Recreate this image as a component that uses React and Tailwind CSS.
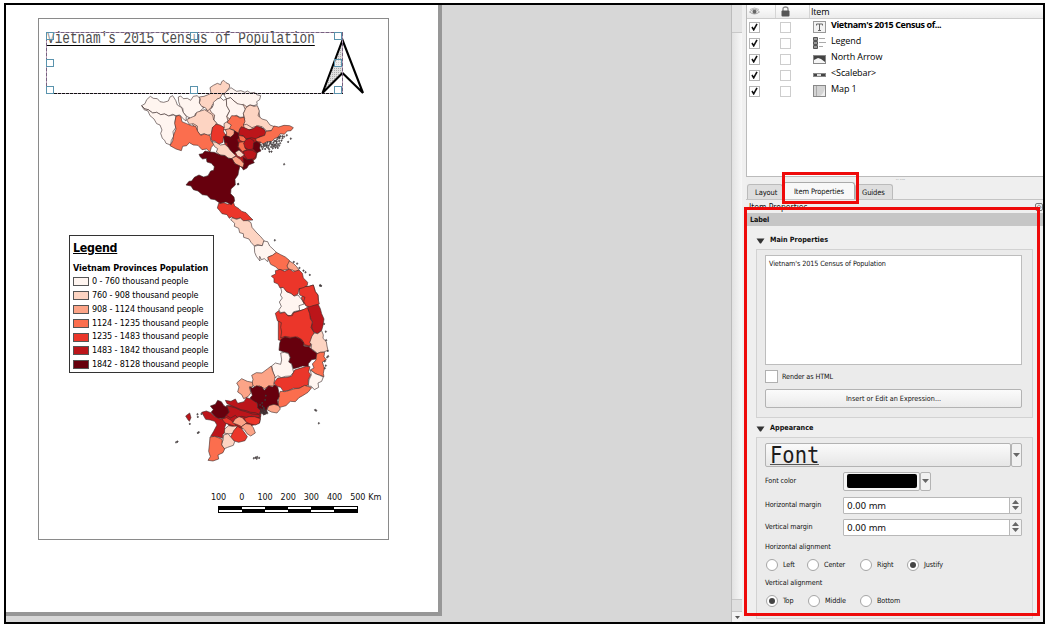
import React from "react";

const P0 = "#fff5f0", P1 = "#fdd4c2", P2 = "#fca487", P3 = "#fb6e4e", P4 = "#eb362a", P5 = "#bc151a", P6 = "#67000d";

const NORTH = [
  [P5, "284,180 330,160 400,160 404,184 386,212 378,250 340,282 300,245 284,205"],
  [P1, "175,130 300,70 385,100 395,158 320,170 250,158 200,165"],
  [P1, "240,38 250,31 262,25 272,29 275,20 281,16 288,23 298,28 299,36 292,46 286,57 276,58 270,70 262,72 257,83 248,88 243,98 233,108 226,98 212,94 208,84 211,74 208,66 222,64 232,60 243,55"],
  [P0, "286,52 296,44 303,38 312,44 320,49 333,47 345,52 352,48 362,54 374,52 380,59 392,62 389,74 380,80 382,88 372,92 360,90 350,95 340,88 331,92 322,86 312,78 302,68 290,72 283,62"],
  [P0, "35,92 45,86 50,74 61,64 70,70 82,71 90,80 101,82 115,78 120,66 128,62 137,76 142,90 155,98 160,112 169,124 168,138 158,130 150,120 138,122 128,118 116,123 104,117 92,119 80,112 68,114 55,104 45,102"],
  [P0, "35,92 45,102 55,104 68,114 80,112 92,119 104,117 116,123 130,120 138,124 135,140 137,158 129,170 131,184 124,196 122,210 108,205 104,196 97,190 92,175 96,165 90,150 80,146 72,132 60,122 54,108 42,104"],
  [P0, "145,66 152,63 160,71 172,70 182,76 190,64 202,62 209,70 208,84 216,95 222,98 212,106 208,112 196,116 194,126 182,130 170,124 160,112 158,100 150,92 146,80"],
  [P1, "170,134 182,128 196,122 200,112 212,108 224,104 236,112 248,120 251,135 260,143 256,152 247,158 245,176 232,182 222,176 210,180 202,168 202,153 190,146 178,148"],
  [P0, "250,82 262,72 272,68 280,76 289,72 290,92 299,108 290,124 294,138 282,146 283,158 270,155 260,144 252,135 254,120 244,112 240,104 246,98 250,90"],
  [P0, "289,72 302,68 312,78 322,86 340,90 346,104 340,116 342,126 330,127 320,121 308,126 298,132 291,124 299,108 290,92"],
  [P1, "348,98 360,90 372,94 382,92 388,108 384,122 396,132 410,136 420,150 436,156 426,166 410,168 398,156 384,152 366,158 350,148 340,150 344,130 340,116"],
  [P3, "299,132 305,122 320,123 330,129 342,127 345,139 340,150 343,158 330,160 325,178 313,166 298,161 304,150 291,142"],
  [P3, "138,124 147,121 153,126 156,140 170,146 184,152 197,154 203,169 212,181 224,177 240,182 243,198 252,208 244,217 240,231 230,222 216,224 204,211 190,210 178,203 170,212 158,214 154,227 138,222 120,212 128,198 131,180 138,162 134,145"],
  [P4, "248,157 258,148 270,150 282,157 281,170 287,180 280,190 279,202 265,208 256,199 244,196 243,180"],
  [P2, "286,164 298,161 313,167 315,180 303,187 288,184 290,174"],
  [P6, "280,185 288,182 302,187 312,177 313,168 325,174 329,187 321,194 326,204 323,215 331,226 318,232 311,240 304,228 294,220 292,204 284,202"],
  [P5, "328,166 334,155 348,160 358,165 371,160 380,153 391,157 405,165 408,175 400,184 389,184 380,192 364,188 348,192 340,182 326,180"],
  [P3, "408,169 424,167 432,153 446,156 462,151 479,152 490,158 483,167 472,168 463,178 451,176 444,187 433,191 426,199 411,200 399,207 391,201 379,200 377,191 392,185 404,181"],
  [P3, "326,181 340,184 348,192 352,197 341,201 329,196"],
  [P3, "327,202 342,200 347,206 345,219 350,225 337,230 325,215"],
  [P5, "347,194 360,190 371,197 376,213 370,222 356,224 345,218 341,205"],
  [P6, "371,204 380,199 391,207 389,220 393,228 381,233 369,221"],
  [P5, "340,229 354,225 367,226 380,234 376,247 363,255 352,253 344,243"],
  [P1, "316,232 327,225 335,232 343,240 332,247 322,243"],
  [P6, "339,247 352,254 366,252 373,263 356,270 351,279 340,285 335,273 342,265"],
  [P2, "305,250 318,244 331,253 342,266 339,277 324,272 313,264"],
  [P1, "246,199 260,203 271,210 285,208 295,217 301,226 310,235 318,242 304,251 293,249 283,241 270,240 259,231 263,221 254,215"],
  [P6, "207,238 217,236 225,228 240,231 253,232 262,236 273,241 285,242 295,250 306,251 315,266 330,273 326,288 324,300 315,313 316,330 303,342 302,356 312,366 314,378 304,389 288,381 270,385 255,374 242,372 231,361 217,359 204,348 190,344 183,333 168,330 177,319 185,318 193,307 207,300 221,306 234,302 242,288 251,286 253,275 244,265 231,261 229,250 218,252 211,246"],
];

const CENTER = [
  [P4, "116,70 130,68 144,73 160,66 164,78 177,86 185,94 198,98 207,108 219,120 202,121 190,124 181,114 168,117 154,111 148,115 141,104 126,101 119,92 112,84"],
  [P1, "152,119 158,114 170,118 181,114 190,122 204,122 213,128 216,142 228,156 242,170 253,183 247,197 232,194 223,198 213,187 207,177 191,172 190,161 179,158 176,145 163,139 164,130"],
  [P0, "223,199 234,196 247,197 251,183 263,185 269,198 279,207 289,217 280,226 266,230 263,245 253,236 244,239 239,229 240,243 229,229 224,217"],
  [P3, "263,232 277,226 289,217 302,224 316,231 328,241 331,251 322,256 327,267 309,271 295,268 286,260 272,253 268,244"],
  [P2, "328,243 340,250 349,259 357,269 348,276 338,270 327,269 321,258"],
  [P4, "274,288 287,282 286,272 300,268 314,274 328,267 340,275 357,270 367,280 370,294 383,307 382,316 370,323 357,326 354,342 342,348 333,340 320,335 309,322 300,324 294,312 282,307 282,296"],
];

const SOUTH = [
  [P5, "185,377 260,370 290,390 284,428 240,445 200,445 176,420"],
  [P4, "340,110 430,85 445,160 436,200 340,180"],
  [P0, "347,21 357,22 365,35 378,40 389,48 399,45 411,60 418,72 402,77 404,91 386,95 378,107 368,106 359,96 346,98 342,89 349,79 343,66 352,54 346,45 350,36"],
  [P4, "403,26 418,20 432,19 445,15 451,35 459,45 460,60 456,72 441,78 426,79 417,70 409,54 413,47"],
  [P5, "427,84 436,75 447,74 458,70 466,86 470,101 477,117 474,137 470,151 458,161 446,156 440,141 442,126 436,113 431,101"],
  [P4, "331,100 341,92 345,100 359,97 369,108 382,107 386,98 403,93 417,88 427,82 434,101 436,116 442,126 438,143 448,159 442,170 439,186 434,198 419,194 411,179 397,171 376,172 360,169 347,174 350,156 347,142 349,128 337,122"],
  [P1, "441,168 448,159 458,161 470,152 475,165 474,175 484,185 486,198 489,211 476,216 466,217 456,221 448,212 438,207 440,193 434,188"],
  [P6, "344,190 348,178 360,171 375,175 391,171 406,177 416,188 415,198 432,200 443,211 457,221 453,237 440,239 430,251 430,260 413,258 398,263 385,266 380,252 371,247 376,232 370,219 357,216 342,211"],
  [P3, "455,222 466,217 479,217 477,230 484,240 472,246 478,264 475,280 477,290 464,286 450,281 437,269 447,264 442,252 453,240"],
  [P0, "347,219 358,217 371,221 375,233 371,246 380,252 383,266 386,277 376,288 361,289 349,293 338,287 331,294 324,277 320,258 331,249 347,253 350,240"],
  [P4, "327,308 338,294 350,293 366,292 379,289 389,270 405,265 425,259 435,260 431,276 437,284 430,299 430,315 413,320 402,325 385,325 372,331 355,334 347,322 333,318"],
  [P0, "436,270 451,281 464,286 475,291 470,304 459,309 461,322 448,329 439,319 430,318 432,300 439,285"],
  [P3, "341,346 346,334 360,335 377,330 390,326 403,325 419,316 440,323 429,337 413,347 402,353 391,365 376,364 363,377 345,382 339,376 341,361"],
  [P2, "260,286 274,278 291,279 307,267 319,258 322,271 330,290 329,300 326,312 329,318 312,318 299,326 284,318 271,322 260,313 264,298"],
  [P2, "215,309 230,296 247,304 262,307 264,319 253,323 258,338 249,350 236,356 230,344 218,336 222,321"],
  [P6, "254,320 263,324 275,317 291,321 298,331 311,317 322,321 329,315 338,321 341,334 343,349 337,361 340,377 321,375 308,381 303,397 291,395 278,383 276,369 262,363 255,354 262,346 258,334"],
  [P2, "306,389 312,377 327,373 341,377 346,387 336,399 319,396"],
  [P5, "181,361 198,364 211,357 218,370 237,365 244,353 258,357 277,370 278,384 287,391 283,403 271,398 257,397 244,392 228,389 214,383 200,377 186,371"],
  [P6, "136,378 151,373 158,361 169,365 177,377 188,383 192,400 184,405 177,414 158,416 149,409 138,397 145,389"],
  [P5, "110,397 124,393 137,398 150,410 165,417 177,413 188,420 184,430 179,442 182,455 173,464 173,475 157,470 137,469 146,454 156,435 149,424 136,420 122,418"],
  [P5, "185,377 198,380 212,384 226,391 242,395 262,402 283,404 286,411 273,414 259,409 244,412 230,409 218,413 211,406 197,414 184,406 193,396"],
  [P4, "171,417 185,413 197,420 209,431 214,440 201,436 190,432 180,429"],
  [P2, "210,417 222,410 232,413 240,422 249,426 239,433 230,440 218,434 203,429"],
  [P4, "237,415 252,410 269,410 286,416 283,430 271,435 257,432 244,427"],
  [P1, "179,447 191,437 203,439 217,438 212,449 204,460 188,462 178,459"],
  [P2, "228,441 242,431 256,433 265,443 271,459 257,468 246,461 239,450"],
  [P4, "207,451 218,439 230,446 240,460 247,470 240,482 221,487 208,483 196,472"],
  [P1, "176,465 189,461 198,472 209,485 205,496 188,502 176,507 169,493 174,481"],
  [P3, "135,471 149,469 165,475 172,479 170,495 179,507 174,518 159,525 161,537 144,543 129,541 136,530 131,514 133,495"],
  [P5, "62,408 74,399 78,413 73,424 68,418"],
  ["#4a2a30", "286,384 292,388 297,382 302,390 308,397 300,404 293,402 287,396"],
];

const CENTER_EAST = [
  [P4, "358,326 373,320 387,319 400,315 406,335 414,345 415,360 418,372 402,376 389,380 378,378 371,364 375,352 359,345"],
];

const ISLES_N = "392,210 399,216 402,208 405,222 412,203 416,212 420,201 423,216 430,203 428,220 434,209 437,198 441,214 444,188 447,198 450,205 451,184 457,190 462,185 470,181 474,201 482,191 410,216 397,222 417,223 443,219 439,205 408,211 425,209 433,198 448,190 454,197 418,230 424,230 462,268 324,328 432,214 436,218 414,219 404,213 400,210 407,206 411,211 419,207 428,209 440,200 444,208 448,186 429,214 422,204 394,215 437,211 441,193 457,184 447,212".split(" ");
const ISLES_C = "174,12 284,181 358,264 370,272 376,277 389,285 420,316 423,318 351,251 341,246".split(" ");
const ISLES_S = "465,17 477,132 482,155 483,181 488,213 489,229 486,232 479,244 482,257 479,265 453,392 450,390 461,430 101,457 98,459 37,485 33,487 109,402 97,403 98,411 74,432 266,535 271,533 276,531 282,534 275,536 287,399 291,397 296,403 300,399 306,400 299,394 285,375 291,369 300,360 302,347 292,379 296,384".split(" ");

function Region({ x, y, shapes, isles = [] }) {
  return (
    <g transform={`translate(${x} ${y}) scale(0.33333)`}>
      {shapes.map(([fill, points], i) => (
        <polygon key={i} points={points} fill={fill} stroke="#3b2a2a" strokeWidth="1.8" strokeLinejoin="round" />
      ))}
      {isles.map((p, i) => {
        const [cx, cy] = p.split(",").map(Number);
        return <path key={i} d={`M${cx - 2} ${cy - 1}l3 -2l2 3l-3 3z`} fill="#55494b" stroke="#2e2a2c" strokeWidth="1.2" />;
      })}
    </g>
  );
}

function VietnamMap() {
  return (
    <svg className="absolute left-0 top-0" width="438" height="612" viewBox="0 0 438 612">
      <Region x={165} y={280} shapes={SOUTH} isles={ISLES_S} />
      <Region x={180} y={180} shapes={CENTER_EAST} />
      <Region x={180} y={180} shapes={CENTER} isles={ISLES_C} />
      <Region x={130} y={75} shapes={NORTH} isles={ISLES_N} />
    </svg>
  );
}

function Selection() {
  const handles = [[46, 32.5], [190.5, 32.5], [334.5, 32.5], [46, 59.5], [334.5, 59.5], [46, 86], [190.5, 86], [334.5, 86]];
  return (
    <svg className="absolute left-0 top-0" width="438" height="110" viewBox="0 0 438 110">
      <defs>
        <pattern id="dots" width="2" height="2" patternUnits="userSpaceOnUse">
          <rect width="2" height="2" fill="#e0e0e0" />
          <rect width="1" height="1" fill="#aaa" />
        </pattern>
      </defs>
      <path d="M342.5 40L322.5 93L342.5 73Z" fill="url(#dots)" />
      <path d="M342.5 40L322.5 93L342.5 73L363 93Z" fill="none" stroke="#000" strokeWidth="2.1" />
      <rect x="46.5" y="32.5" width="296" height="61" fill="none" stroke="#b59ab5" />
      <path d="M46 93.5H343" stroke="#111" strokeDasharray="3 1" />
      <path d="M46 32.5H343M46.5 33V93M342.5 33V93" stroke="#75627f" strokeDasharray="3 2" />
      {handles.map(([x, y], i) => (
        <rect key={i} x={Math.floor(x) + 0.5} y={Math.floor(y) + 0.5} width="7" height="7" fill="#fff" fillOpacity="0.45" stroke="#5a93ad" />
      ))}
    </svg>
  );
}

const LEGEND = [
  ["bg-[#fff5f0]", "0 - 760 thousand people"],
  ["bg-[#fdd4c2]", "760 - 908 thousand people"],
  ["bg-[#fca487]", "908 - 1124 thousand people"],
  ["bg-[#fb6e4e]", "1124 - 1235 thousand people"],
  ["bg-[#eb362a]", "1235 - 1483 thousand people"],
  ["bg-[#bc151a]", "1483 - 1842 thousand people"],
  ["bg-[#67000d]", "1842 - 8128 thousand people"],
];

function Legend() {
  return (
    <div className="absolute left-[69px] top-[235px] w-[145px] h-[138px] bg-white border border-[#333] pl-[3px] pt-[4px] font-['DejaVu_Sans_Condensed','DejaVu_Sans',sans-serif] text-black whitespace-nowrap">
      <div className="text-[12.3px] leading-[16px] font-bold underline tracking-[-0.25px]">Legend</div>
      <div className="mt-[5px] text-[9px] leading-[14px] font-bold tracking-[-0.07px]">Vietnam Provinces Population</div>
      {LEGEND.map(([color, label]) => (
        <div key={label} className="flex h-[13.8px] items-center gap-[3px] text-[9px] tracking-[-0.12px]">
          <span className={`h-[9px] w-[16px] border border-[#555] ${color}`} />
          <span>{label}</span>
        </div>
      ))}
    </div>
  );
}

function ScaleBar() {
  return (
    <div className="absolute left-[207px] top-[491px] font-['DejaVu_Sans_Condensed','DejaVu_Sans',sans-serif] text-[9px] leading-[12px] text-[#111]">
      <div className="flex tracking-[-0.1px]">
        {["100", "0", "100", "200", "300", "400", "500"].map((n, i) => (
          <span key={i} className="w-[23.2px] text-center">{n}</span>
        ))}
        <span className="-ml-[1px]">Km</span>
      </div>
      <div className="ml-[11px] mt-[3px] flex h-[7px] w-[140px] border border-black">
        {[0, 1, 2, 3, 4, 5].map((i) => (
          <div key={i} className={`flex flex-1 ${i % 2 ? "flex-col-reverse" : "flex-col"}`}>
            <span className="h-[3px] bg-black" />
            <span className="h-[2px] bg-white" />
          </div>
        ))}
      </div>
    </div>
  );
}

function Canvas() {
  return (
    <div className="relative h-full w-[725px] overflow-hidden bg-[#d7d7d7]">
      <div className="h-[611px] w-[436px] border-b-4 border-r-4 border-[#979797] bg-white" />
      <div className="absolute -left-[6px] -top-[5px] h-[612px] w-[438px]">
        <div className="absolute left-[38px] top-[18px] h-[522px] w-[351px] border border-[#8a8a8a]" />
        <VietnamMap />
        <div className="absolute left-[47px] top-[31px] h-[15px] origin-left scale-x-[0.797] whitespace-nowrap border-b border-black font-['Liberation_Mono',monospace] text-[16px] leading-[17px] text-[#4c4c4c]">
          Vietnam's 2015 Census of Population
        </div>
        <Selection />
        <Legend />
        <ScaleBar />
      </div>
    </div>
  );
}

function ItemIcon({ kind }) {
  return (
    <svg width="13" height="12" viewBox="0 0 13 12" className="shrink-0">
      {kind === "label" && (
        <g>
          <rect x="0.5" y="0.5" width="12" height="11" fill="#f3f3f3" stroke="#999" />
          <path d="M3.5 4.5V3H9.5V4.5M6.5 3V9.5M5 9.5H8" stroke="#666" fill="none" />
        </g>
      )}
      {kind === "legend" && (
        <g>
          <path d="M0.5 0.5h4v3h-4zM0.5 4.5h4v3h-4zM0.5 8.5h4v3h-4z" fill="#999" stroke="#555" />
          <path d="M6 1.5H12M6 5.5H13M6 9.5H10" stroke="#aaa" />
        </g>
      )}
      {kind === "picture" && (
        <g>
          <rect x="0.5" y="2.5" width="12" height="8" fill="#f5f5f5" stroke="#888" />
          <path d="M1 3H12V9L8 6L5 5L1 7Z" fill="#444" />
        </g>
      )}
      {kind === "scale" && (
        <g>
          <rect x="0.5" y="4.5" width="12" height="3" fill="#ddd" stroke="#888" />
          <path d="M1 5h3v2H1zM8 5h4v2H8z" fill="#444" />
        </g>
      )}
      {kind === "map" && (
        <g>
          <rect x="0.5" y="0.5" width="12" height="11" fill="#d4d4d4" stroke="#888" />
          <path d="M3.5 1V11" stroke="#aaa" />
          <path d="M7 11Q11 8 12 3V11Z" fill="#eee" />
        </g>
      )}
    </svg>
  );
}

const ITEMS = [
  ["label", "Vietnam's 2015 Census of..."],
  ["legend", "Legend"],
  ["picture", "North Arrow"],
  ["scale", "<Scalebar>"],
  ["map", "Map 1"],
];

function ItemTree() {
  return (
    <div className="h-[172px] border-b border-l border-[#bbb] bg-white font-['Open_Sans',sans-serif] text-[9px] text-black">
      <div className="flex h-[14px] items-center border-b border-[#ccc] bg-gradient-to-b from-white to-[#ececec]">
        <div className="w-[28px] pl-[2px]">
          <svg width="11" height="9" viewBox="0 0 11 9">
            <path d="M0.5 5Q5.5 -0.5 10.5 5Q5.5 9 0.5 5Z" fill="#e8e8e8" stroke="#aaa" />
            <circle cx="5.5" cy="4.7" r="2" fill="#666" />
            <path d="M1 2.5Q5.5 -0.5 10 2.5" fill="none" stroke="#aaa" strokeWidth="0.8" />
          </svg>
        </div>
        <div className="flex h-full w-[34px] items-center border-l border-[#d5d5d5] pl-[5px]">
          <svg width="9" height="11" viewBox="0 0 9 11">
            <path d="M2 5V3Q2 1 4.5 1T7 3V5" fill="none" stroke="#888" strokeWidth="1.3" />
            <rect x="0.5" y="4.5" width="8" height="6" rx="1" fill="#555" />
          </svg>
        </div>
        <div className="border-l border-[#d5d5d5] pl-[1px] leading-[13px] tracking-[-0.2px]">Item</div>
      </div>
      {ITEMS.map(([kind, label], i) => (
        <div key={kind} className="flex h-[16px] items-center">
          <span className="ml-[2px] flex h-[11px] w-[11px] items-center justify-center border border-[#b5b5b5] bg-white">
            <svg width="7" height="8" viewBox="0 0 7 8"><path d="M1 4L2.7 6.8L6 0.8" fill="none" stroke="#111" strokeWidth="1.6" /></svg>
          </span>
          <span className="ml-[20px] h-[11px] w-[11px] border border-[#cdcdcd] bg-white" />
          <span className="ml-[22px] flex"><ItemIcon kind={kind} /></span>
          <span className={`ml-[5px] -mt-[5px] whitespace-nowrap leading-[12px] ${i === 0 ? "font-bold tracking-[-0.4px]" : "tracking-[-0.1px]"}`}>{label}</span>
        </div>
      ))}
    </div>
  );
}

function Section({ title }) {
  return (
    <div className="flex items-center gap-[5px] pl-[10px] font-bold tracking-[0px]">
      <svg width="9" height="6" viewBox="0 0 9 6" className="mt-[3px]"><path d="M0.5 0.5H8.5L5 5.5H4Z" fill="#333" /></svg>
      {title}
    </div>
  );
}

function Arrow({ up }) {
  return (
    <svg width="7" height="4" viewBox="0 0 7 4"><path d={up ? "M0 4H7L3.5 0Z" : "M0 0H7L3.5 4Z"} fill="#666" /></svg>
  );
}

function Spin({ label, className }) {
  return (
    <div className={`flex h-[18px] items-center ${className}`}>
      <span className="w-[78px]">{label}</span>
      <div className="flex h-[17px] w-[179px] rounded-[1px] border border-[#b8b8b8] bg-white">
        <span className="flex-1 pl-[3px] font-['DejaVu_Sans',sans-serif] text-[9px] leading-[16px] tracking-[-0.25px]">0.00 mm</span>
        <span className="flex w-[12px] flex-col items-center justify-center gap-[2px] border-l border-[#b8b8b8] bg-[#f3f3f3]"><Arrow up /><Arrow /></span>
      </div>
    </div>
  );
}

function Radio({ label, on, className = "" }) {
  return (
    <span className={`flex items-center gap-[5px] ${className}`}>
      <span className="flex h-[12px] w-[12px] shrink-0 items-center justify-center rounded-full border border-[#a5a5a5] bg-white">
        {on && <span className="h-[6px] w-[6px] rounded-full bg-[#444]" />}
      </span>
      {label}
    </span>
  );
}

function Properties() {
  return (
    <div className="h-[409px] font-['DejaVu_Sans_Condensed','DejaVu_Sans',sans-serif] text-[7.2px] leading-[10px] tracking-[-0.1px] text-[#111]">
      <div className="flex h-[13px] items-center bg-[#c6c6c6] pl-[4px] font-bold">Label</div>
      <div className="flex h-[23px] items-center pt-[4px]"><Section title="Main Properties" /></div>
      <div className="ml-[10px] h-[169px] w-[277px] border border-[#d2d2d2] bg-[#ebebeb] pl-[8px] pt-[5px]">
        <div className="h-[110px] w-[257px] border border-[#bdbdbd] bg-white pl-[3px] pt-[3px]">Vietnam's 2015 Census of Population</div>
        <div className="mt-[5px] flex h-[13px] items-center gap-[4px]">
          <span className="h-[13px] w-[13px] border border-[#b0b0b0] bg-white" />Render as HTML
        </div>
        <div className="mt-[6px] flex h-[19px] w-[257px] items-center justify-center rounded-[2px] border border-[#b3b3b3] bg-gradient-to-b from-[#fbfbfb] to-[#ebebeb] tracking-[0px]">Insert or Edit an Expression...</div>
      </div>
      <div className="flex h-[19px] items-center"><Section title="Appearance" /></div>
      <div className="ml-[10px] h-[182px] w-[277px] border border-[#d2d2d2] bg-[#ebebeb] pl-[8px] pt-[5px]">
        <div className="flex h-[24px] w-[257px]">
          <div className="flex-1 overflow-hidden rounded-[2px] border border-[#b3b3b3] bg-gradient-to-b from-[#fbfbfb] to-[#e6e6e6] pl-[4px]">
            <span className="inline-block h-[21px] origin-left scale-x-[0.89] border-b border-[#555] font-['DejaVu_Sans_Mono',monospace] text-[23px] leading-[22px] tracking-normal text-[#1c1c1c]">Font</span>
          </div>
          <div className="flex w-[11px] items-center justify-center rounded-[2px] border border-[#b3b3b3] bg-[#f1f1f1]"><Arrow /></div>
        </div>
        <div className="mt-[4px] flex h-[20px] items-center">
          <span className="w-[78px]">Font color</span>
          <div className="flex h-[19px] w-[77px] items-center justify-center rounded-[2px] border border-[#b3b3b3] bg-[#f6f6f6]"><span className="h-[14px] w-[70px] rounded-[2px] bg-black" /></div>
          <div className="flex h-[19px] w-[11px] items-center justify-center rounded-[2px] border border-[#b3b3b3] bg-[#f1f1f1]"><Arrow /></div>
        </div>
        <Spin label="Horizontal margin" className="mt-[5px]" />
        <Spin label="Vertical margin" className="mt-[4px]" />
        <div className="mt-[6px]">Horizontal alignment</div>
        <div className="mt-[7px] flex h-[12px] items-center pl-px">
          <Radio label="Left" className="w-[41px]" />
          <Radio label="Center" className="w-[53px]" />
          <Radio label="Right" className="w-[47px]" />
          <Radio label="Justify" on />
        </div>
        <div className="mt-[7px]">Vertical alignment</div>
        <div className="mt-[7px] flex h-[12px] items-center pl-px">
          <Radio label="Top" on className="w-[42px]" />
          <Radio label="Middle" className="w-[52px]" />
          <Radio label="Bottom" />
        </div>
      </div>
    </div>
  );
}

function SidePanel() {
  return (
    <div className="flex w-[297px] flex-col bg-[#efefef]">
      <ItemTree />
      <div className="flex h-[6px] justify-center pl-[12px] text-[5px] leading-[2px] text-[#999]">.. ....</div>
      <div className="flex h-[16px] items-end pl-px font-['DejaVu_Sans_Condensed','DejaVu_Sans',sans-serif] text-[7.5px] tracking-[-0.1px] text-[#111]">
        <div className="flex h-[15px] w-[36px] items-center rounded-t-[3px] border border-b-0 border-[#bbb] bg-[#dedede] pl-[7px] pt-px">Layout</div>
        <div className="flex h-[17px] w-[72px] items-center justify-center rounded-t-[3px] border border-b-0 border-[#aaa] bg-[#f8f8f8] pt-px">Item Properties</div>
        <div className="flex h-[15px] w-[38px] items-center rounded-t-[3px] border border-b-0 border-[#bbb] bg-[#dedede] pl-[6px] pt-px">Guides</div>
      </div>
      <div className="flex h-[14px] items-center justify-between border-t border-[#c4c4c4] pl-[3px] font-['DejaVu_Sans_Condensed','DejaVu_Sans',sans-serif] text-[8.5px] leading-[12px] text-[#111]">
        Item Properties
        <span className="flex h-[8px] w-[8px] items-center justify-center rounded-[2px] border border-[#777] text-[7px] leading-[6px]">◇</span>
      </div>
      <Properties />
    </div>
  );
}

export default function App() {
  return (
    <div className="h-[629px] w-[1049px] overflow-hidden bg-white pl-[4px] pt-[3px]">
      <div className="relative flex h-[621px] w-[1041px] overflow-hidden border-2 border-black bg-[#efefef]">
        <Canvas />
        <div className="flex w-[15px] shrink-0 border-l border-[#bcbcbc] bg-[#f0f0f0]">
          <div className="flex w-[10px] flex-col bg-gradient-to-r from-[#e2e2e2] to-[#f8f8f8]">
            <div className="h-[28px] border-b border-[#c8c8c8] bg-[#e4e4e4]" />
            <div className="flex-1" />
            <div className="h-[13px] border-y border-[#c8c8c8] bg-[#dfdfdf]" />
            <div className="flex h-[10px] items-center justify-center bg-[#f4f4f4]">
              <svg width="5" height="3" viewBox="0 0 5 3"><path d="M0 0H5L2.5 3Z" fill="#555" /></svg>
            </div>
          </div>
        </div>
        <SidePanel />
        <div className="absolute left-[776px] top-[167px] h-[32px] w-[77px] border-[3px] border-[#ee0a0a]" />
        <div className="absolute left-[738px] top-[202px] h-[409px] w-[296px] border-[3px] border-[#ee0a0a]" />
      </div>
    </div>
  );
}
